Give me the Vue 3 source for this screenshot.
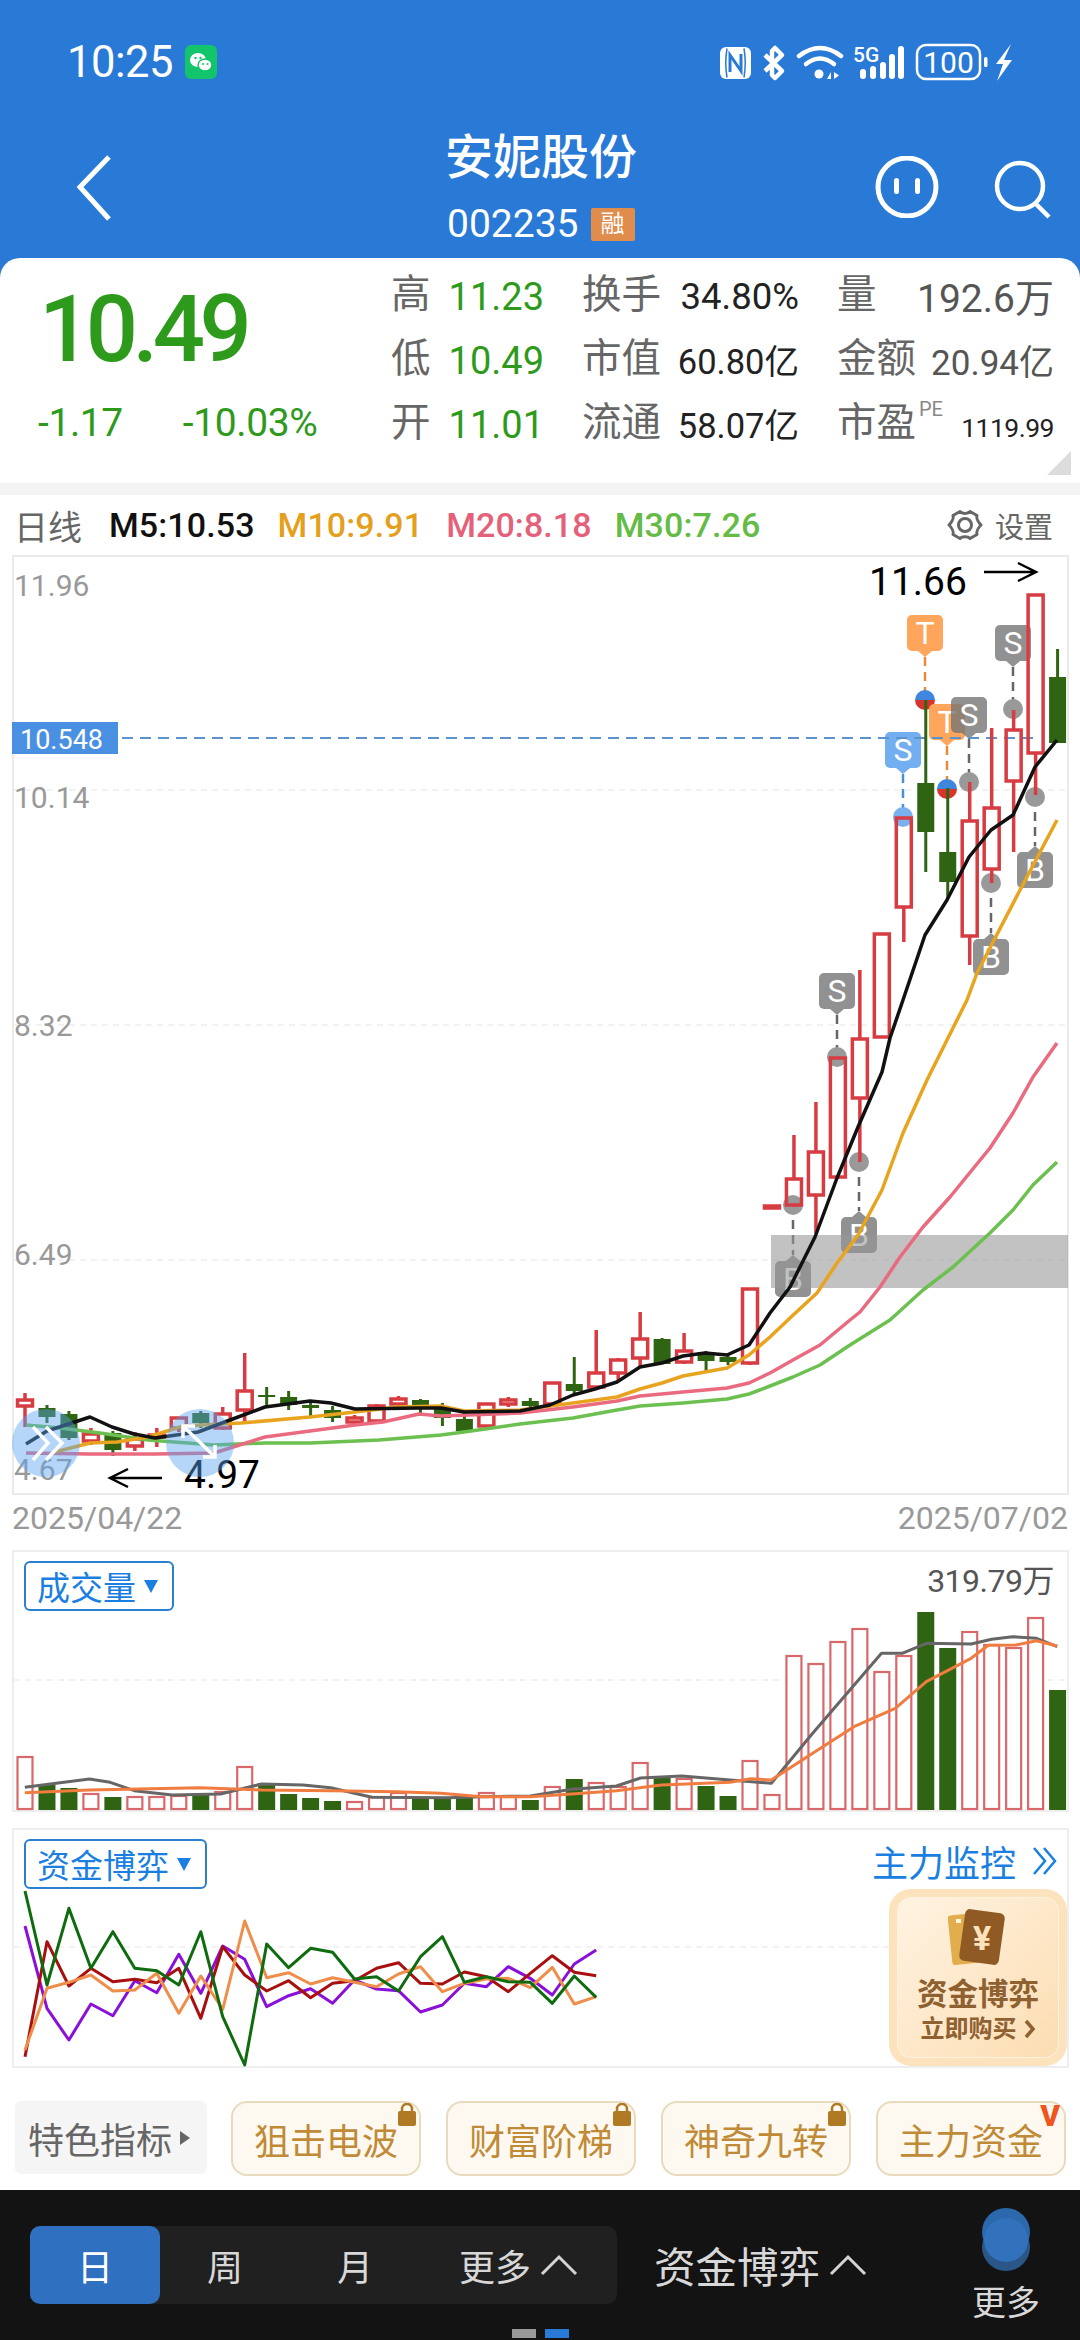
<template>
  <div class="page">
    <!-- 顶部蓝色区域 -->
    <header class="top">
      <div class="status">
        <span class="clock">10:25</span>
        <svg class="wechat" width="32" height="34" viewBox="0 0 32 34">
          <rect width="32" height="34" rx="6" fill="#12c46b" />
          <ellipse cx="13" cy="15" rx="8" ry="7" fill="#fff" />
          <ellipse cx="20" cy="20" rx="7" ry="6" fill="#fff" stroke="#12c46b" stroke-width="1.5" />
          <circle cx="10.500" cy="13" r="1.200" fill="#12c46b" />
          <circle cx="15.500" cy="13" r="1.200" fill="#12c46b" />
          <circle cx="18" cy="19" r="1" fill="#12c46b" />
          <circle cx="22.500" cy="19" r="1" fill="#12c46b" />
        </svg>
        <svg class="sys-icons" width="300" height="40" viewBox="715 40 300 40">
          <!-- NFC -->
          <rect x="720" y="45" width="31" height="32" rx="6" fill="#fff" />
          <path d="M727 46.500Q724.500 61 727 75.500M744 46.500Q746.500 61 744 75.500" fill="none" stroke="#2979d6" stroke-width="1.500" />
          <path d="M730 70V53L741 69V52" fill="none" stroke="#2979d6" stroke-width="3" />
          <!-- 蓝牙 -->
          <path d="M765 53L782 69L775 76L772 73V49L775 46L782 53L765 69" fill="none" stroke="#fff" stroke-width="4.500" stroke-linejoin="round" />
          <!-- wifi -->
          <path d="M799 54Q820 38 841 54" fill="none" stroke="#fff" stroke-width="4.500" stroke-linecap="round" />
          <path d="M806 62Q820 51 834 62" fill="none" stroke="#fff" stroke-width="4.500" stroke-linecap="round" />
          <circle cx="819" cy="72" r="4.500" fill="#fff" />
          <path d="M831 77V70L827 77ZM834 70V77L839 73.500Z" fill="#fff" />
          <!-- 5G 信号 -->
          <text x="853" y="60" class="five-g">5G</text>
          <rect x="860" y="67" width="6" height="10" rx="3" fill="#fff" />
          <rect x="870" y="64" width="6" height="13" rx="3" fill="#fff" />
          <rect x="880" y="60" width="6" height="17" rx="3" fill="#fff" />
          <rect x="889" y="52" width="6" height="25" rx="3" fill="#fff" />
          <rect x="898" y="44" width="6" height="33" rx="3" fill="#fff" />
          <!-- 电池 -->
          <rect x="917" y="43" width="63" height="34" rx="9" fill="none" stroke="#fff" stroke-width="2.500" />
          <text x="948.500" y="71" text-anchor="middle" class="batt">100</text>
          <rect x="984" y="55" width="3.500" height="10" rx="1.500" fill="#fff" />
          <path d="M1011 42L996 62H1003L997 79L1012 58H1004Z" fill="#fff" />
        </svg>
      </div>
      <div class="nav">
        <svg class="back" width="44" height="70" viewBox="0 0 44 70">
          <path d="M37 4L8 34L37 66" fill="none" stroke="#fff" stroke-width="5" />
        </svg>
        <div class="title-box">
          <div class="title">安妮股份</div>
          <div class="code">002235<span class="rong">融</span></div>
        </div>
        <svg class="nav-icon face" width="66" height="62" viewBox="0 0 66 62">
          <circle cx="33" cy="31" r="29" fill="none" stroke="#fff" stroke-width="5" />
          <rect x="20" y="22" width="5" height="16" rx="2.500" fill="#fff" />
          <rect x="41" y="22" width="5" height="16" rx="2.500" fill="#fff" />
        </svg>
        <svg class="nav-icon search" width="60" height="60" viewBox="0 0 60 60">
          <circle cx="26" cy="26" r="23" fill="none" stroke="#fff" stroke-width="4.500" />
          <path d="M41 43L55 57" fill="none" stroke="#fff" stroke-width="4.500" />
        </svg>
      </div>
    </header>

    <!-- 行情卡片 -->
    <section class="quote">
      <div class="quote-left">
        <div class="price">10.49</div>
        <div class="change">
          <span>-1.17</span>
          <span>-10.03%</span>
        </div>
      </div>
      <div class="stats">
        <div v-for="s in stats" :key="s.label" class="stat">
          <span class="stat-label">{{ s.label }}<sup v-if="s.sup">{{ s.sup }}</sup></span>
          <span class="stat-value" :class="s.cls">{{ s.value }}</span>
        </div>
      </div>
      <div class="corner"></div>
    </section>
    <div class="gap"></div>

    <!-- 均线栏 -->
    <div class="ma-bar">
      <span class="ma-name">日线</span>
      <span v-for="m in maList" :key="m.text" class="ma-item" :style="{ color: m.color }">{{ m.text }}</span>
      <span class="setting">
        <svg width="36" height="36" viewBox="0 0 36 36">
          <path d="M13 4.500C15 7 21 7 23 4.500L30 8.500C29 11.500 32 16 34 18C32 20 29 24.500 30 27.500L23 31.500C21 29 15 29 13 31.500L6 27.500C7 24.500 4 20 2 18C4 16 7 11.500 6 8.500Z" fill="none" stroke="#666" stroke-width="3" stroke-linejoin="round" />
          <circle cx="18" cy="18" r="6.500" fill="none" stroke="#666" stroke-width="3" />
        </svg>
        设置
      </span>
    </div>

    <!-- K线主图 -->
    <svg class="chart" width="1080" height="940" viewBox="0 555 1080 940">
      <rect x="13" y="556" width="1055" height="938" fill="#fff" stroke="#eaeaea" stroke-width="2" />
      <line v-for="y in [790, 1025, 1260]" :key="y" x1="14" x2="1067" :y1="y" :y2="y" stroke="#eee" stroke-width="1.500" stroke-dasharray="6 5" />
      <text x="14" y="596" class="axis">11.96</text>
      <text x="14" y="808" class="axis">10.14</text>
      <text x="14" y="1036" class="axis">8.32</text>
      <text x="14" y="1265" class="axis">6.49</text>
      <text x="14" y="1480" class="axis">4.67</text>

      <!-- 买卖标记 -->
      <g v-for="t in tags" :key="t.x + t.label + t.y">
        <line :x1="t.x" :x2="t.x" :y1="t.up ? t.dot : t.y + 42" :y2="t.up ? t.y - 6 : t.dot" :stroke="t.line" stroke-width="2.500" stroke-dasharray="9 6" />
        <circle v-if="!t.split" :cx="t.x" :cy="t.dot" r="10" :fill="t.dotFill" />
        <g v-else>
          <path :d="`M${t.x - 10} ${t.dot}a10 10 0 0 1 20 0z`" fill="#3f86de" />
          <path :d="`M${t.x - 10} ${t.dot}a10 10 0 0 0 20 0z`" fill="#d8342e" />
        </g>
        <rect :x="t.x - 18" :y="t.y" width="36" height="36" rx="5" :fill="t.fill" />
        <polygon :points="t.up ? `${t.x - 7},${t.y} ${t.x + 7},${t.y} ${t.x},${t.y - 6}` : `${t.x - 7},${t.y + 36} ${t.x + 7},${t.y + 36} ${t.x},${t.y + 42}`" :fill="t.fill" />
        <text :x="t.x" :y="t.y + 29" text-anchor="middle" class="tag-text">{{ t.label }}</text>
      </g>

      <rect x="771" y="1235" width="297" height="53" fill="#969696" opacity="0.58" />
      <line x1="14" x2="1035" y1="738" y2="738" stroke="#5b93cc" stroke-width="2" stroke-dasharray="11 7" />
      <rect x="12" y="722" width="106" height="32" fill="#4a90e2" />
      <text x="20" y="749" class="price-line">10.548</text>

      <!-- 蜡烛，阳线空心 -->
      <g v-for="(c, i) in candles" :key="i">
        <line :x1="cx(i)" :x2="cx(i)" :y1="c[3]" :y2="c[0] === 'r' ? c[1] : c[4]" :stroke="c[0] === 'r' ? RED : GREEN" :stroke-width="c[0] === 'r' ? 3.500 : 3" />
        <line v-if="c[0] === 'r'" :x1="cx(i)" :x2="cx(i)" :y1="c[2]" :y2="c[4]" :stroke="RED" stroke-width="3.500" />
        <rect v-if="c[0] === 'r'" :x="cx(i) - 7.500" :y="c[1]" width="15" :height="c[2] - c[1]" fill="none" :stroke="RED" stroke-width="3.500" />
        <rect v-else :x="cx(i) - 8.500" :y="c[1]" width="17" :height="c[2] - c[1]" :fill="GREEN" />
      </g>

      <!-- 均线 -->
      <polyline :points="pts(m30)" fill="none" stroke="#6cc04f" stroke-width="3.500" stroke-linejoin="round" />
      <polyline :points="pts(m20)" fill="none" stroke="#ea6a80" stroke-width="3.500" stroke-linejoin="round" />
      <polyline :points="pts(m10)" fill="none" stroke="#e8a41e" stroke-width="3.500" stroke-linejoin="round" />
      <polyline :points="pts(m5)" fill="none" stroke="#111" stroke-width="3.500" stroke-linejoin="round" />

      <!-- 高低点 -->
      <text x="869" y="595" class="peak">11.66</text>
      <path d="M984 572H1035M1018 563L1036 572L1018 581" fill="none" stroke="#000" stroke-width="2.500" />
      <text x="184" y="1488" class="peak">4.97</text>
      <path d="M162 1478H111M128 1469L110 1478L128 1487" fill="none" stroke="#000" stroke-width="2.500" />

      <!-- 悬浮按钮 -->
      <circle cx="46" cy="1443" r="34" fill="#5aa5f0" opacity="0.45" />
      <path d="M33 1427L48 1443L33 1460M46 1427L62 1443L46 1460" fill="none" stroke="#fff" stroke-width="3.500" />
      <circle cx="200" cy="1443" r="34" fill="#5aa5f0" opacity="0.45" />
      <path d="M183 1426L215 1457M183 1438V1426H195M215 1445V1457H203" fill="none" stroke="#fff" stroke-width="3.500" />
    </svg>
    <div class="dates">
      <span>2025/04/22</span>
      <span>2025/07/02</span>
    </div>

    <!-- 成交量 -->
    <section class="panel">
      <svg class="chart" width="1080" height="262" viewBox="0 1550 1080 262">
        <rect x="13" y="1551" width="1055" height="260" fill="#fff" stroke="#eee" stroke-width="2" />
        <line x1="14" x2="1067" y1="1680" y2="1680" stroke="#eee" stroke-width="1.500" stroke-dasharray="6 5" />
        <g v-for="(v, i) in volumes" :key="i">
          <rect v-if="candles[i][0] === 'r'" :x="cx(i) - 7.500" :y="v" width="15" :height="1809 - v" fill="#fff" stroke="#d9686a" stroke-width="2.200" />
          <rect v-else :x="cx(i) - 8.500" :y="v" width="17" :height="1810 - v" :fill="GREEN" />
        </g>
        <polyline :points="zoomPts(volGray, 1540)" fill="none" stroke="#666" stroke-width="3" stroke-linejoin="round" />
        <polyline :points="zoomPts(volOrange, 1540)" fill="none" stroke="#f07c40" stroke-width="3" stroke-linejoin="round" />
      </svg>
      <div class="picker">成交量<i class="tri"></i></div>
      <div class="vol-max">319.79万</div>
    </section>

    <!-- 资金博弈 -->
    <section class="panel panel-fund">
      <svg class="chart" width="1080" height="240" viewBox="0 1828 1080 240">
        <rect x="13" y="1829" width="1055" height="238" fill="#fff" stroke="#eee" stroke-width="2" />
        <line x1="14" x2="1067" y1="1947" y2="1947" stroke="#eee" stroke-width="1.500" stroke-dasharray="6 5" />
        <polyline v-for="l in fundLines" :key="l.color" :points="fundPts(l.data)" fill="none" :stroke="l.color" stroke-width="3" stroke-linejoin="round" />
      </svg>
      <div class="picker picker-fund">资金博弈<i class="tri"></i></div>
      <div class="monitor">主力监控
        <svg width="26" height="30" viewBox="0 0 26 30">
          <path d="M2 2L13 15L2 28M12 2L23 15L12 28" fill="none" stroke="#1a7fe0" stroke-width="2.500" />
        </svg>
      </div>
      <div class="promo">
        <div class="promo-inner">
          <svg class="promo-card" width="60" height="60" viewBox="0 0 60 60">
            <rect x="2" y="6" width="30" height="50" rx="3" fill="#e2ad4c" transform="rotate(-6 17 31)" />
            <rect x="8" y="11" width="5" height="4" fill="#fff4dc" />
            <rect x="14" y="3" width="40" height="52" rx="5" fill="#8f5a24" transform="rotate(8 34 29)" />
            <text x="34" y="42" text-anchor="middle" class="yen">¥</text>
          </svg>
          <div class="promo-title">资金博弈</div>
          <div class="promo-buy">立即购买
            <svg width="12" height="20" viewBox="0 0 12 20"><path d="M2 2L9 10L2 18" fill="none" stroke="#8f6030" stroke-width="3.500" /></svg>
          </div>
        </div>
      </div>
    </section>

    <!-- 特色指标 -->
    <div class="chips">
      <div class="feature">特色指标<i class="tri-right"></i></div>
      <div v-for="c in chips" :key="c.text" class="chip">
        {{ c.text }}
        <svg v-if="c.lock" class="lock" width="20" height="23" viewBox="0 0 20 23">
          <path d="M5 9V6a5 5 0 0 1 10 0v3" fill="none" stroke="#b07a24" stroke-width="2.500" />
          <rect x="1" y="8" width="18" height="15" rx="2" fill="#b07a24" />
        </svg>
        <span v-else class="vip">V</span>
      </div>
    </div>

    <!-- 底部工具栏 -->
    <footer class="bottom">
      <div class="bottom-row">
        <div class="segment">
          <span class="seg active">日</span>
          <span class="seg">周</span>
          <span class="seg">月</span>
          <span class="seg seg-more">更多
            <svg width="38" height="22" viewBox="0 0 38 22"><path d="M2 20L19 3L36 20" fill="none" stroke="#d4d4d4" stroke-width="3" /></svg>
          </span>
        </div>
        <div class="indicator">资金博弈
          <svg width="38" height="22" viewBox="0 0 38 22"><path d="M2 20L19 3L36 20" fill="none" stroke="#d4d4d4" stroke-width="3" /></svg>
        </div>
        <div class="more">
          <svg width="48" height="63" viewBox="0 0 48 63">
            <circle cx="24" cy="39" r="24" fill="#2b5688" />
            <circle cx="24" cy="24" r="24" fill="#2c68ac" />
            <circle cx="24" cy="32" r="22" fill="#3272bc" />
          </svg>
          <span>更多</span>
        </div>
      </div>
      <div class="dots"><i></i><i class="on"></i></div>
    </footer>
  </div>
</template>

<script setup>
const RED = '#d63c42'
const GREEN = '#2f6412'

const stats = [
  { label: '高', value: '11.23', cls: 'up' },
  { label: '换手', value: '34.80%', cls: 'mid pct' },
  { label: '量', value: '192.6万', cls: 'wide' },
  { label: '低', value: '10.49', cls: 'up' },
  { label: '市值', value: '60.80亿', cls: 'mid' },
  { label: '金额', value: '20.94亿', cls: 'mid gray' },
  { label: '开', value: '11.01', cls: 'up' },
  { label: '流通', value: '58.07亿', cls: 'mid' },
  { label: '市盈', sup: 'PE', value: '1119.99', cls: 'tiny' }
]

const maList = [
  { text: 'M5:10.53', color: '#111' },
  { text: 'M10:9.91', color: '#e49f1c' },
  { text: 'M20:8.18', color: '#e5607a' },
  { text: 'M30:7.26', color: '#64bb46' }
]

const chips = [
  { text: '狙击电波', lock: true },
  { text: '财富阶梯', lock: true },
  { text: '神奇九转', lock: true },
  { text: '主力资金', lock: false }
]

// [颜色, 实体上沿, 实体下沿, 最高, 最低]
const candles = [
  ['r', 1400, 1406, 1393, 1427], ['g', 1408, 1417, 1405, 1423], ['g', 1414, 1438, 1411, 1440],
  ['r', 1434, 1441, 1428, 1445], ['g', 1433, 1450, 1431, 1456], ['r', 1439, 1446, 1432, 1451],
  ['r', 1435, 1437, 1428, 1447], ['r', 1418, 1428, 1417, 1432], ['g', 1413, 1423, 1411, 1428],
  ['r', 1414, 1428, 1407, 1430], ['r', 1391, 1410, 1353, 1423], ['g', 1395, 1397, 1387, 1407],
  ['g', 1397, 1405, 1391, 1410], ['g', 1405, 1408, 1403, 1416], ['g', 1410, 1418, 1406, 1422],
  ['r', 1418, 1422, 1415, 1426], ['r', 1406, 1421, 1404, 1424], ['r', 1399, 1404, 1396, 1408],
  ['g', 1400, 1406, 1399, 1413], ['g', 1408, 1418, 1403, 1426], ['g', 1419, 1431, 1413, 1431],
  ['r', 1404, 1426, 1403, 1429], ['r', 1400, 1404, 1397, 1407], ['g', 1401, 1406, 1398, 1410],
  ['r', 1383, 1404, 1382, 1406], ['g', 1384, 1391, 1357, 1393], ['r', 1373, 1387, 1330, 1389],
  ['r', 1360, 1373, 1358, 1380], ['r', 1339, 1358, 1312, 1367], ['g', 1339, 1364, 1338, 1364],
  ['r', 1351, 1362, 1333, 1364], ['g', 1352, 1361, 1351, 1373], ['g', 1357, 1362, 1355, 1365],
  ['r', 1289, 1363, 1288, 1365], ['r', 1206, 1208, 1206, 1208], ['r', 1179, 1205, 1135, 1207],
  ['r', 1152, 1195, 1102, 1233], ['r', 1058, 1177, 1057, 1179], ['r', 1039, 1098, 970, 1162],
  ['r', 934, 1037, 933, 1038], ['r', 818, 907, 817, 942], ['g', 783, 832, 700, 872],
  ['g', 852, 882, 788, 898], ['r', 821, 936, 782, 965], ['r', 808, 869, 728, 883],
  ['r', 730, 781, 710, 852], ['r', 595, 753, 594, 795], ['g', 677, 743, 649, 743]
]

const cx = i => 25 + i * 21.97
const pts = arr => arr.map(p => p.join(',')).join(' ')
// 放大图坐标换算回页面坐标
const zoomPts = (arr, y0) => arr.map(p => `${(p[0] / 1.452).toFixed(1)},${(y0 + p[1] / 3).toFixed(1)}`).join(' ')
const fundPts = arr => arr.map((y, i) => `${cx(i).toFixed(1)},${(1820 + y / 3).toFixed(1)}`).join(' ')

const m5 = [[26, 1444], [47, 1431], [90, 1417], [112, 1427], [134, 1434], [155, 1438], [198, 1432], [230, 1420], [265, 1407], [310, 1401], [331, 1403], [355, 1409], [419, 1408], [441, 1408], [464, 1412], [520, 1411], [550, 1405], [573, 1395], [595, 1389], [617, 1382], [640, 1367], [662, 1363], [683, 1356], [705, 1353], [727, 1355], [749, 1345], [770, 1313], [790, 1287], [815, 1237], [837, 1178], [858, 1127], [882, 1072], [890, 1038], [903, 1000], [925, 935], [947, 900], [969, 857], [991, 830], [1013, 815], [1035, 767], [1057, 740]]
const m10 = [[55, 1452], [90, 1443], [117, 1442], [148, 1437], [183, 1426], [241, 1423], [310, 1417], [355, 1412], [397, 1407], [441, 1406], [464, 1411], [520, 1410], [550, 1406], [573, 1403], [617, 1397], [640, 1389], [662, 1383], [683, 1376], [705, 1372], [727, 1368], [749, 1355], [770, 1337], [790, 1318], [817, 1293], [837, 1263], [858, 1235], [882, 1190], [903, 1133], [927, 1080], [948, 1038], [967, 1000], [977, 973], [1020, 890], [1057, 820]]
const m20 = [[26, 1453], [90, 1454], [155, 1454], [214, 1453], [265, 1437], [310, 1431], [355, 1425], [383, 1422], [419, 1414], [441, 1416], [520, 1413], [573, 1407], [617, 1401], [640, 1396], [683, 1392], [727, 1388], [749, 1383], [770, 1373], [793, 1360], [820, 1345], [850, 1320], [860, 1312], [880, 1287], [900, 1257], [923, 1227], [950, 1197], [990, 1148], [1013, 1113], [1033, 1077], [1057, 1043]]
const m30 = [[26, 1425], [60, 1428], [100, 1433], [148, 1440], [214, 1445], [265, 1443], [310, 1443], [379, 1440], [441, 1435], [464, 1432], [520, 1424], [573, 1418], [617, 1410], [640, 1406], [683, 1403], [727, 1399], [749, 1394], [770, 1386], [793, 1377], [820, 1365], [850, 1345], [890, 1320], [923, 1290], [953, 1267], [990, 1233], [1013, 1210], [1033, 1185], [1057, 1162]]

const GRAY_TAG = 'rgba(118,118,118,0.8)'
const tags = [
  { x: 925, y: 615, label: 'T', fill: '#ffa65c', line: '#e88a3c', dot: 700, split: true },
  { x: 1013, y: 625, label: 'S', fill: GRAY_TAG, line: '#666', dot: 709, dotFill: '#999' },
  { x: 947, y: 704, label: 'T', fill: '#ffa65c', line: '#e88a3c', dot: 789, split: true },
  { x: 969, y: 697, label: 'S', fill: GRAY_TAG, line: '#666', dot: 782, dotFill: '#999' },
  { x: 903, y: 732, label: 'S', fill: '#73aff0', line: '#4a90d8', dot: 817, dotFill: '#7ab0ee' },
  { x: 1035, y: 852, label: 'B', up: true, fill: GRAY_TAG, line: '#666', dot: 797, dotFill: '#999' },
  { x: 991, y: 939, label: 'B', up: true, fill: GRAY_TAG, line: '#666', dot: 883, dotFill: '#999' },
  { x: 837, y: 973, label: 'S', fill: GRAY_TAG, line: '#666', dot: 1057, dotFill: '#999' },
  { x: 859, y: 1217, label: 'B', up: true, fill: GRAY_TAG, line: '#666', dot: 1162, dotFill: '#999' },
  { x: 793, y: 1261, label: 'B', up: true, fill: GRAY_TAG, line: '#666', dot: 1205, dotFill: '#999' }
]

const volumes = [1757, 1785, 1788, 1794, 1797, 1797, 1797, 1796, 1795, 1792, 1767, 1783, 1794, 1798, 1801, 1802, 1797, 1793, 1799, 1798, 1797, 1793, 1797, 1800, 1787, 1779, 1783, 1787, 1763, 1778, 1779, 1786, 1796, 1761, 1795, 1656, 1664, 1642, 1629, 1672, 1656, 1612, 1648, 1632, 1645, 1648, 1618, 1690]

const volGray = [[36, 742], [130, 717], [160, 727], [195, 752], [250, 765], [320, 762], [380, 732], [440, 735], [480, 743], [540, 772], [650, 773], [700, 770], [770, 768], [830, 748], [895, 738], [930, 714], [990, 708], [1060, 720], [1120, 730], [1180, 580], [1280, 340], [1310, 340], [1345, 310], [1410, 312], [1440, 298], [1470, 290], [1505, 295], [1535, 320]]
const volOrange = [[36, 758], [130, 750], [290, 743], [380, 750], [480, 752], [575, 755], [640, 760], [700, 770], [770, 770], [830, 762], [895, 752], [960, 735], [1060, 727], [1090, 716], [1120, 720], [1180, 640], [1240, 560], [1300, 505], [1345, 425], [1410, 355], [1435, 316], [1475, 315], [1505, 302], [1535, 318]]

const fundLines = [
  { color: '#8a10d8', data: [318, 565, 660, 552, 587, 482, 518, 403, 520, 378, 418, 560, 527, 506, 550, 480, 507, 512, 576, 555, 490, 500, 440, 475, 525, 432, 390] },
  { color: '#a80f0f', data: [710, 365, 498, 445, 485, 478, 488, 445, 595, 380, 465, 513, 482, 533, 490, 482, 445, 428, 490, 492, 456, 470, 515, 460, 407, 457, 467] },
  { color: '#ee8e4a', data: [690, 505, 487, 465, 513, 510, 460, 580, 468, 568, 303, 473, 458, 492, 473, 487, 500, 462, 440, 515, 490, 477, 475, 503, 442, 552, 530] },
  { color: '#0e6b0e', data: [213, 495, 265, 445, 335, 445, 452, 495, 335, 590, 735, 372, 443, 385, 397, 477, 470, 513, 410, 350, 487, 470, 485, 487, 550, 468, 532] }
]
</script>

<style>
html, body {
  margin: 0;
  background: #fff;
}
</style>

<style scoped>
.page {
  width: 1080px;
  height: 2340px;
  overflow: hidden;
  background: #fff;
  font-family: Roboto, "Noto Sans CJK SC", sans-serif;
  color: #222;
}

.top {
  height: 278px;
  background: #2979d6;
  color: #fff;
}

.status {
  height: 124px;
  display: flex;
  align-items: center;
  padding-left: 67px;
}

.clock {
  font-size: 43.5px;
  letter-spacing: -0.5px;
}

.wechat {
  margin-left: 12px;
}

.sys-icons {
  margin-left: auto;
  margin-right: 65px;
}

.five-g {
  font: 500 21px Roboto, sans-serif;
  fill: #fff;
}

.batt {
  font: 400 30px Roboto, sans-serif;
  fill: #fff;
}

.nav {
  display: flex;
  align-items: flex-start;
  height: 134px;
}

.back {
  margin: 29px 0 0 72px;
  flex-shrink: 0;
}

.title-box {
  margin-left: 329px;
  width: 192px;
  flex-shrink: 0;
  text-align: center;
}

.title {
  font-size: 48px;
  line-height: 60px;
  margin-top: 4px;
  font-weight: 500;
}

.code {
  display: flex;
  align-items: center;
  justify-content: flex-start;
  font-size: 39px;
  line-height: 40px;
  margin-top: 16px;
  padding-left: 2px;
  white-space: nowrap;
}

.rong {
  width: 44px;
  height: 33px;
  margin-left: 12px;
  flex-shrink: 0;
  background: #e08c4c;
  border-radius: 2px;
  font-size: 24px;
  line-height: 33px;
  text-align: center;
}

.nav-icon {
  flex-shrink: 0;
}

.nav-icon.face {
  margin: 32px 0 0 237px;
}

.nav-icon.search {
  margin: 36px 0 0 54px;
}

.quote {
  position: relative;
  height: 225px;
  margin-top: -20px;
  background: #fff;
  border-radius: 20px 20px 0 0;
  display: flex;
}

.quote-left {
  width: 391px;
  flex-shrink: 0;
  padding-left: 38px;
  box-sizing: border-box;
}

.price {
  margin: 27px 0 0 1px;
  font-size: 92px;
  line-height: 90px;
  letter-spacing: -5.5px;
  font-weight: 500;
  color: #2e9a1c;
}

.change {
  display: flex;
  gap: 60px;
  margin-top: 26px;
  font-size: 39px;
  line-height: 44px;
  letter-spacing: -0.4px;
  color: #2e9a1c;
}

.stats {
  display: grid;
  grid-template-columns: 153px 217px 217px;
  grid-auto-rows: 64px;
  column-gap: 38px;
  padding-top: 5px;
  align-items: center;
}

.stat {
  display: flex;
  justify-content: space-between;
  align-items: center;
  white-space: nowrap;
}

.stat-label {
  font-size: 39.5px;
  line-height: 46px;
  color: #666;
  position: relative;
}

.stat-label sup {
  position: absolute;
  left: 82px;
  top: -1px;
  font-size: 20px;
  line-height: 20px;
  color: #888;
}

.stat-value.up {
  font-size: 38px;
  margin-top: 3px;
  color: #2e9a1c;
}

.stat-value.mid {
  font-size: 34.500px;
  color: #222;
}

.stat-value.pct {
  font-size: 36.500px;
  margin-top: 3px;
}

.stat-value.gray {
  font-size: 35px;
  color: #555;
}

.stat-value.wide {
  font-size: 39px;
  color: #555;
}

.stat-value.tiny {
  font-size: 26.500px;
  letter-spacing: -0.5px;
  margin-top: 8px;
}

.corner {
  position: absolute;
  right: 9px;
  bottom: 8px;
  width: 0;
  height: 0;
  border-left: 24px solid transparent;
  border-bottom: 24px solid #dcdcdc;
}

.gap {
  height: 12px;
  background: #f4f4f4;
}

.ma-bar {
  height: 60px;
  display: flex;
  align-items: center;
  gap: 23px;
  padding-left: 14px;
  box-sizing: border-box;
}

.ma-name {
  font-size: 34px;
  color: #666;
  margin-right: 4px;
}

.ma-item {
  font-size: 34px;
  font-weight: 500;
  letter-spacing: 0.1px;
}

.setting {
  display: flex;
  align-items: center;
  gap: 12px;
  margin-left: auto;
  margin-right: 27px;
  font-size: 29px;
  color: #666;
}

.chart {
  display: block;
  overflow: visible;
}

.axis {
  font: 400 30px Roboto, sans-serif;
  fill: #999;
}

.tag-text {
  font: 400 32px Roboto, sans-serif;
  fill: #fff;
}

.price-line {
  font: 400 27px Roboto, sans-serif;
  fill: #fff;
}

.peak {
  font: 400 39px Roboto, sans-serif;
  fill: #000;
}

.dates {
  height: 45px;
  margin-bottom: 10px;
  display: flex;
  justify-content: space-between;
  align-items: center;
  padding: 0 12px;
  font-size: 32px;
  color: #999;
}

.panel {
  position: relative;
}

.panel-fund {
  margin-top: 16px;
}

.picker {
  position: absolute;
  left: 24px;
  top: 11px;
  width: 150px;
  height: 50px;
  box-sizing: border-box;
  border: 2px solid #2b7fd0;
  border-radius: 6px;
  background: #fff;
  display: flex;
  align-items: center;
  padding-left: 11px;
  font-size: 33px;
  color: #1a7fe0;
}

.picker-fund {
  width: 183px;
}

.tri {
  margin-left: 8px;
  width: 0;
  height: 0;
  border-left: 7px solid transparent;
  border-right: 7px solid transparent;
  border-top: 13px solid #1a7fe0;
}

.vol-max {
  position: absolute;
  right: 26px;
  top: 5px;
  font-size: 32px;
  letter-spacing: -0.5px;
  color: #555;
}

.monitor {
  position: absolute;
  right: 22px;
  top: 7px;
  display: flex;
  align-items: center;
  gap: 16px;
  font-size: 36px;
  color: #1a7fe0;
}

.promo {
  position: absolute;
  left: 889px;
  top: 61px;
  width: 178px;
  height: 177px;
  box-sizing: border-box;
  padding: 8px;
  border-radius: 22px;
  background: #fde3bd;
}

.promo-inner {
  height: 100%;
  box-sizing: border-box;
  border: 1px solid #fff3e0;
  border-radius: 14px;
  background: linear-gradient(135deg, #fff3e2, #fcddb2);
  text-align: center;
  color: #8f6030;
  font-weight: 700;
  padding-top: 10px;
}

.promo-card {
  display: block;
  margin: 0 auto;
}

.yen {
  font: 700 34px Roboto, sans-serif;
  fill: #fde3bd;
}

.promo-title {
  font-size: 30.500px;
  line-height: 38px;
  margin-top: 8px;
}

.promo-buy {
  display: flex;
  align-items: center;
  justify-content: center;
  gap: 7px;
  font-size: 24px;
  line-height: 30px;
  margin-top: 0;
  white-space: nowrap;
}

.chips {
  height: 122px;
  display: flex;
  gap: 25px;
  padding: 33px 0 0 15px;
  box-sizing: border-box;
}

.feature {
  width: 192px;
  height: 73px;
  margin-right: -1px;
  padding-left: 13px;
  box-sizing: border-box;
  background: #f5f5f5;
  border-radius: 6px;
  display: flex;
  align-items: center;
  gap: 8px;
  font-size: 36px;
  color: #666;
}

.tri-right {
  width: 0;
  height: 0;
  border-top: 7px solid transparent;
  border-bottom: 7px solid transparent;
  border-left: 10px solid #666;
}

.chip {
  position: relative;
  width: 190px;
  height: 75px;
  box-sizing: border-box;
  border: 2px solid #e9dabd;
  border-radius: 16px;
  background: #fdf9f1;
  display: flex;
  align-items: center;
  justify-content: center;
  font-size: 36px;
  color: #c08a36;
}

.lock {
  position: absolute;
  right: 2px;
  top: 0;
}

.vip {
  position: absolute;
  right: 4px;
  top: -2px;
  font: 900 30px/30px Roboto, sans-serif;
  color: #f0551e;
}

.bottom {
  height: 150px;
  background: #131313;
  color: #d8d8d8;
}

.bottom-row {
  height: 139px;
  display: flex;
  align-items: flex-start;
  padding-left: 30px;
}

.segment {
  width: 587px;
  height: 78px;
  margin-top: 36px;
  flex-shrink: 0;
  display: flex;
  background: #202020;
  border-radius: 10px;
  font-size: 36px;
}

.seg {
  display: flex;
  align-items: center;
  justify-content: center;
  gap: 9px;
  width: 130px;
}

.seg.active {
  background: #3070c0;
  border-radius: 10px;
  color: #fff;
}

.seg-more {
  width: 197px;
}

.indicator {
  display: flex;
  align-items: center;
  gap: 9px;
  height: 78px;
  margin: 36px 0 0 37px;
  font-size: 41.500px;
  white-space: nowrap;
}

.more {
  display: flex;
  flex-direction: column;
  align-items: center;
  width: 68px;
  margin: 18px 0 0 105px;
  font-size: 34px;
  line-height: 40px;
  flex-shrink: 0;
}

.more span {
  margin-top: 12px;
}

.dots {
  display: flex;
  justify-content: center;
  gap: 9px;
}

.dots i {
  width: 24px;
  height: 9px;
  background: #999;
}

.dots i.on {
  background: #2979d6;
}
</style>
